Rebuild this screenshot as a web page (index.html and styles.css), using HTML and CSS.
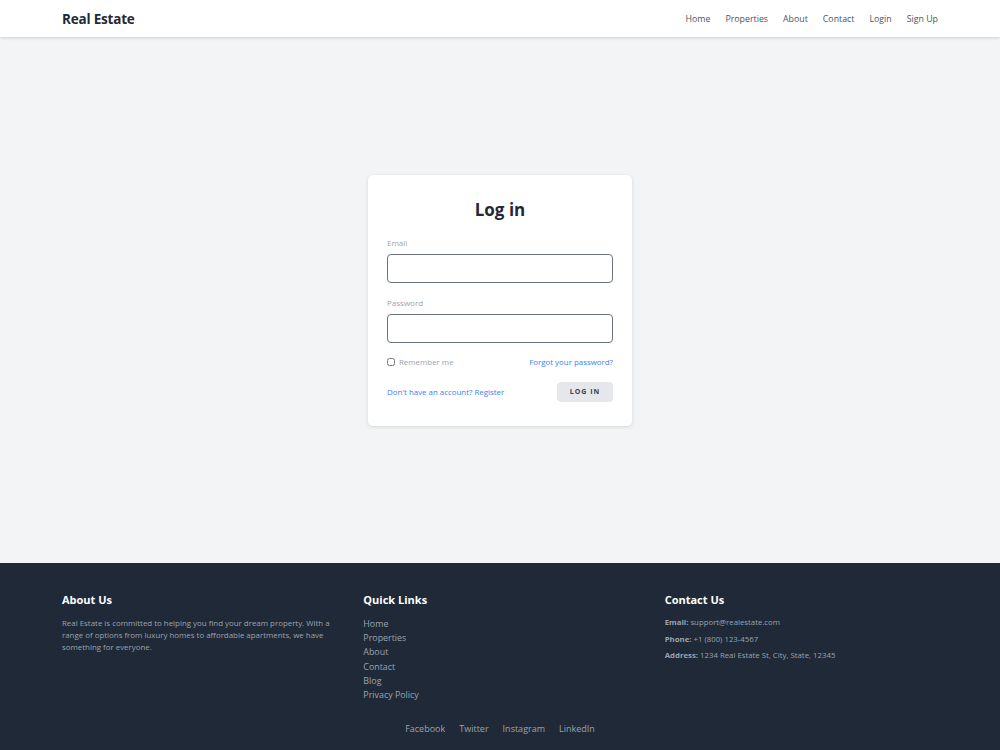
FILE: index.html
```html
<!DOCTYPE html>
<html lang="en">
<head>
    <meta charset="UTF-8">
    <meta name="viewport" content="width=device-width, initial-scale=1.0">
    <title>Real Estate - Log in</title>
    <link rel="stylesheet" href="styles.css">
</head>
<body>
    <!-- Header -->
    <header class="header">
        <div class="wrap header-inner">
            <a class="brand" href="#">Real Estate</a>
            <nav class="nav">
                <a href="#">Home</a>
                <a href="#">Properties</a>
                <a href="#">About</a>
                <a href="#">Contact</a>
                <a href="#">Login</a>
                <a href="#">Sign Up</a>
            </nav>
        </div>
    </header>

    <!-- Login -->
    <main class="main">
        <form class="card">
            <h1>Log in</h1>

            <label class="field-label" for="email">Email</label>
            <input class="field" type="email" id="email">

            <label class="field-label" for="password">Password</label>
            <input class="field" type="password" id="password">

            <div class="row">
                <label class="remember"><input type="checkbox"> Remember me</label>
                <a class="link" href="#">Forgot your password?</a>
            </div>

            <div class="row actions">
                <a class="link" href="#">Don't have an account? Register</a>
                <button type="button" class="login-btn">Log in</button>
            </div>
        </form>
    </main>

    <!-- Footer -->
    <footer class="footer">
        <div class="wrap footer-cols">
            <div>
                <h3>About Us</h3>
                <p class="about-text">Real Estate is committed to helping you find your dream property. With a range of options from luxury homes to affordable apartments, we have something for everyone.</p>
            </div>
            <div>
                <h3>Quick Links</h3>
                <ul class="quick-links">
                    <li><a href="#">Home</a></li>
                    <li><a href="#">Properties</a></li>
                    <li><a href="#">About</a></li>
                    <li><a href="#">Contact</a></li>
                    <li><a href="#">Blog</a></li>
                    <li><a href="#">Privacy Policy</a></li>
                </ul>
            </div>
            <div>
                <h3>Contact Us</h3>
                <p class="contact-line"><strong>Email:</strong> support@realestate.com</p>
                <p class="contact-line"><strong>Phone:</strong> +1 (800) 123-4567</p>
                <p class="contact-line"><strong>Address:</strong> 1234 Real Estate St, City, State, 12345</p>
            </div>
        </div>
        <div class="social">
            <a href="#">Facebook</a>
            <a href="#">Twitter</a>
            <a href="#">Instagram</a>
            <a href="#">LinkedIn</a>
        </div>
    </footer>
</body>
</html>
```

FILE: styles.css
```css
* {
    box-sizing: border-box;
}

body {
    margin: 0;
    font-family: "Open Sans", "Noto Sans", sans-serif;
    background: #f3f4f6;
    color: #1f2937;
}

a {
    text-decoration: none;
    color: inherit;
}

.wrap {
    padding: 0 62px;
}

.header {
    background: #fff;
    height: 37px;
    box-shadow: 0 1px 3px rgba(0, 0, 0, 0.15);
    position: relative;
}

.header-inner {
    height: 100%;
    display: flex;
    align-items: center;
    justify-content: space-between;
}

.brand {
    font-size: 13.5px;
    font-weight: 700;
    color: #1f2937;
    letter-spacing: -0.2px;
}

.nav {
    display: flex;
    gap: 15px;
}

.nav a {
    font-size: 8.8px;
    color: #4b5563;
}

.main {
    height: 526px;
    display: flex;
    align-items: center;
    justify-content: center;
}

.card {
    width: 264px;
    background: #fff;
    border-radius: 5px;
    box-shadow: 0 1px 4px rgba(0, 0, 0, 0.12);
    padding: 22px 19px 24px;
}

.card h1 {
    margin: 0 0 14px;
    text-align: center;
    font-size: 17px;
    font-weight: 700;
    color: #1f2937;
    line-height: 26px;
}

.field-label {
    display: block;
    font-size: 8px;
    color: #9ca3af;
    line-height: 12px;
    margin-bottom: 5px;
}

.field {
    display: block;
    width: 100%;
    height: 29px;
    border: 1px solid #6b7280;
    border-radius: 4px;
    margin-bottom: 14px;
    font-family: inherit;
}

.row {
    display: flex;
    align-items: center;
    justify-content: space-between;
    font-size: 7.9px;
    margin-top: 3px;
}

.remember {
    display: flex;
    align-items: center;
    gap: 4px;
    color: #9ca3af;
}

.remember input {
    margin: 0;
    width: 8px;
    height: 8px;
}

.link {
    color: #3b82f6;
}

.actions {
    margin-top: 15px;
}

.login-btn {
    width: 56px;
    height: 20px;
    border: none;
    border-radius: 4px;
    background: #e5e7eb;
    color: #374151;
    font-family: inherit;
    font-size: 7px;
    font-weight: 700;
    letter-spacing: 1px;
    text-transform: uppercase;
    padding: 0;
}

.footer {
    background: #1f2937;
    color: #9ca3af;
    height: 187px;
    padding-top: 29px;
}

.footer-cols {
    display: grid;
    grid-template-columns: repeat(3, 1fr);
    column-gap: 28px;
}

.footer h3 {
    margin: 0 0 9px;
    font-size: 11px;
    font-weight: 700;
    color: #fff;
    line-height: 16px;
}

.about-text {
    margin: 0;
    font-size: 7.9px;
    line-height: 12px;
    padding-right: 4px;
}

.quick-links {
    list-style: none;
    margin: 0;
    padding: 0;
    font-size: 8.9px;
    line-height: 14.2px;
}

.contact-line {
    margin: 0 0 5px;
    font-size: 7.8px;
    line-height: 11.5px;
}

.contact-line strong {
    color: #9ca3af;
}

.social {
    display: flex;
    justify-content: center;
    gap: 14px;
    margin-top: 20px;
    font-size: 9px;
}
```
